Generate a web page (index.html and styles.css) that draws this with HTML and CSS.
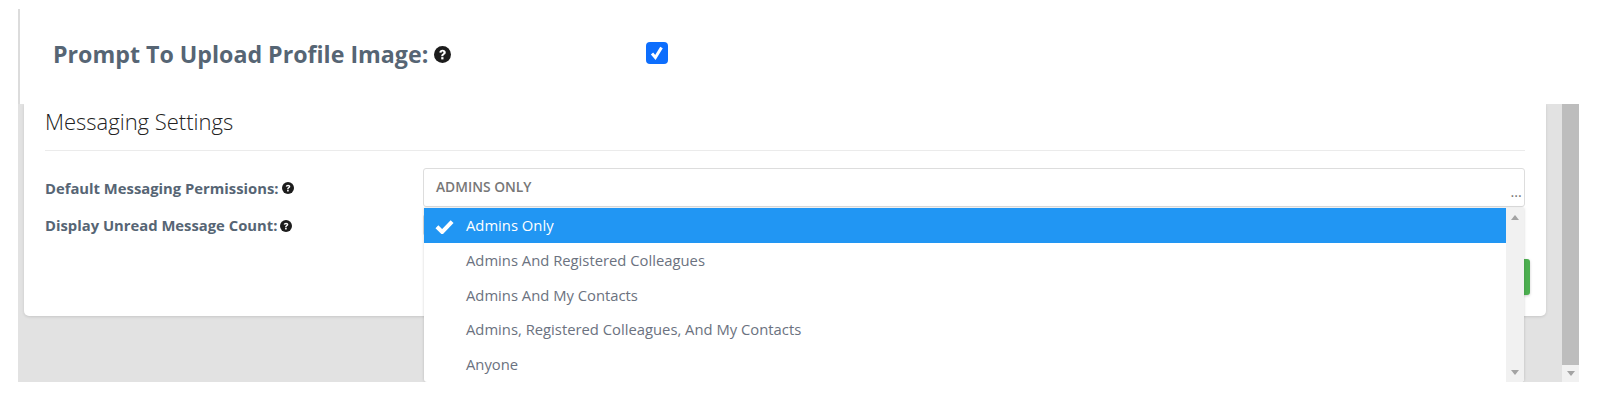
FILE: index.html
```html
<!DOCTYPE html>
<html lang="en">
<head>
    <meta charset="UTF-8">
    <meta name="viewport" content="width=device-width, initial-scale=1.0">
    <title>Messaging Settings</title>
    <link rel="stylesheet" href="styles.css">
</head>
<body>

    <div class="page">

        <div class="profile-panel">
            <label class="profile-label" for="prompt-upload">
                Prompt To Upload Profile Image:
                <svg class="help-icon help-large" viewBox="0 0 24 24"><use href="#help"></use></svg>
            </label>
            <span class="checkbox">
                <svg viewBox="0 0 22 22"><path d="M6 11.500l3.400 4L15.500 5.500" fill="none" stroke="#fff" stroke-width="3"/></svg>
            </span>
        </div>

        <div class="settings-area">
            <div class="content-bg">
                <div class="card">
                    <h2>Messaging Settings</h2>

                    <div class="form-row">
                        <div class="form-label">
                            Default Messaging Permissions:
                            <svg class="help-icon" viewBox="0 0 24 24"><use href="#help"></use></svg>
                        </div>
                        <div class="select-wrap">
                            <div class="select-box">
                                <span>ADMINS ONLY</span>
                                <span class="dots">...</span>
                            </div>

                            <div class="dropdown">
                                <ul class="options">
                                    <li class="selected">
                                        <svg class="tick" viewBox="0 0 18 14"><path d="M1.800 7.200l5 5L16.200 2.400" fill="none" stroke="#fff" stroke-width="3.800"/></svg>
                                        Admins Only
                                    </li>
                                    <li>Admins And Registered Colleagues</li>
                                    <li>Admins And My Contacts</li>
                                    <li>Admins, Registered Colleagues, And My Contacts</li>
                                    <li>Anyone</li>
                                </ul>
                                <div class="list-scroll">
                                    <span class="arrow-up"></span>
                                    <span class="arrow-down"></span>
                                </div>
                            </div>
                        </div>
                    </div>

                    <div class="form-row row-second">
                        <div class="form-label">
                            Display Unread Message Count:
                            <svg class="help-icon" viewBox="0 0 24 24"><use href="#help"></use></svg>
                        </div>
                        <div class="select-stub"></div>
                    </div>

                    <div class="actions">
                        <button type="button" class="save-btn">Save</button>
                    </div>
                </div>
            </div>

            <div class="page-scroll">
                <div class="page-thumb"></div>
                <div class="page-arrow"><span class="arrow-down"></span></div>
            </div>
        </div>

    </div>

    <svg width="0" height="0" class="icon-defs">
        <symbol id="help" viewBox="0 0 24 24">
            <circle cx="12" cy="12" r="12" fill="#1c1c1c"/>
            <path d="M7.500 9.200c.3-2.500 2.100-3.900 4.600-3.900 2.600 0 4.500 1.500 4.500 3.700 0 1.700-1 2.500-2.100 3.200-1 .7-1.300 1.100-1.300 2.100h-3c0-1.900.7-2.800 1.800-3.500.9-.6 1.400-1 1.400-1.700 0-.7-.6-1.200-1.300-1.200-.9 0-1.400.6-1.500 1.500z" fill="#fff"/>
            <rect x="10.200" y="15.700" width="3.200" height="3.200" fill="#fff"/>
        </symbol>
    </svg>

</body>
</html>
```

FILE: styles.css
```css
body {
    font-family: 'Open Sans', sans-serif;
    margin: 0;
    padding: 0;
    background-color: #fff;
    height: 413px;
    overflow: hidden;
}

.page {
    padding-top: 9px;
}

.icon-defs {
    display: block;
    height: 0;
}

.profile-panel {
    margin-left: 18px;
    height: 95px;
    box-sizing: border-box;
    border-left: 2px solid #dcdcdc;
    padding-left: 33px;
    display: flex;
    align-items: center;
}

.profile-label {
    width: 593px;
    font-size: 23.2px;
    font-weight: 700;
    color: #566574;
    display: flex;
    align-items: center;
    gap: 6px;
    margin-top: -5px;
}

.checkbox {
    width: 22px;
    height: 22px;
    border-radius: 4px;
    background-color: #0d6efd;
    display: block;
    margin-top: -8px;
}

.checkbox svg {
    display: block;
}

.help-icon {
    width: 12px;
    height: 12px;
    flex-shrink: 0;
    margin-top: 1px;
}

.help-large {
    width: 17px;
    height: 17px;
}

.settings-area {
    display: flex;
    margin-left: 18px;
    width: 1561px;
    height: 278px;
}

.content-bg {
    flex: 1;
    background-color: #e2e2e2;
    padding-left: 6px;
    padding-right: 16px;
    overflow: hidden;
}

.card {
    height: 212px;
    box-sizing: border-box;
    background-color: #fff;
    border-radius: 0 0 5px 5px;
    box-shadow: 0 1px 3px rgba(0, 0, 0, 0.12);
    padding: 0 16px 0 21px;
}

.card h2 {
    margin: 0 5px 0 0;
    height: 47px;
    box-sizing: border-box;
    padding-top: 3px;
    line-height: 29px;
    font-size: 22px;
    font-weight: 300;
    color: #222;
    border-bottom: 1px solid #ebebeb;
}

.form-row {
    display: flex;
    margin-top: 17px;
    margin-right: 5px;
}

.row-second {
    margin-top: 7px;
    height: 22px;
}

.form-label {
    width: 378px;
    font-size: 14.8px;
    font-weight: 700;
    line-height: 40px;
    height: 39px;
    color: #566574;
    display: flex;
    align-items: center;
    gap: 3px;
}

.row-second .form-label {
    line-height: 22px;
    height: 22px;
}

.select-wrap {
    flex: 1;
    position: relative;
}

.select-box {
    height: 39px;
    box-sizing: border-box;
    border: 1px solid #ddd;
    border-radius: 3px;
    background-color: #fff;
    padding: 0 2px 0 12px;
    font-size: 13.8px;
    font-weight: 600;
    line-height: 36px;
    color: #777;
    display: flex;
    justify-content: space-between;
}

.dots {
    font-size: 12px;
    line-height: 47px;
    letter-spacing: 0.5px;
}

.select-stub {
    width: 40px;
    border: 1px solid #ddd;
    background-color: #eee;
    border-radius: 3px;
}

.dropdown {
    position: absolute;
    top: 40px;
    left: 1px;
    right: 1px;
    height: 174px;
    background-color: #fff;
    display: flex;
    box-shadow: 0 0 3px rgba(0, 0, 0, 0.18);
    border-radius: 0 0 3px 3px;
    overflow: hidden;
    z-index: 10;
}

.options {
    flex: 1;
    list-style: none;
    margin: 0;
    padding: 0;
}

.options li {
    height: 34.5px;
    line-height: 34.5px;
    padding-left: 42px;
    font-size: 14.8px;
    color: #6b7280;
    position: relative;
}

.options li.selected {
    height: 35px;
    background-color: #2196f3;
    color: #fff;
}

.tick {
    position: absolute;
    left: 11px;
    top: 11px;
    width: 19px;
    height: 15px;
}

.list-scroll {
    width: 18px;
    background-color: #f1f1f1;
    display: flex;
    flex-direction: column;
    justify-content: space-between;
    align-items: center;
    padding: 7px 0;
    box-sizing: border-box;
}

.arrow-up,
.arrow-down {
    display: block;
    width: 0;
    height: 0;
    border-left: 4.5px solid transparent;
    border-right: 4.5px solid transparent;
}

.arrow-up {
    border-bottom: 5px solid #a3a3a3;
}

.arrow-down {
    border-top: 5px solid #a3a3a3;
}

.actions {
    display: flex;
    justify-content: flex-end;
    margin-top: 23px;
}

.save-btn {
    width: 80px;
    height: 36px;
    border: none;
    border-radius: 3px;
    background-color: #4caf50;
    color: #fff;
    font-family: inherit;
    font-size: 14px;
    box-shadow: 0 1px 3px rgba(0, 0, 0, 0.2);
}

.page-scroll {
    width: 17px;
    display: flex;
    flex-direction: column;
}

.page-thumb {
    flex: 1;
    background-color: #bdbdbd;
}

.page-arrow {
    height: 17px;
    background-color: #f1f1f1;
    display: flex;
    align-items: center;
    justify-content: center;
}
```
